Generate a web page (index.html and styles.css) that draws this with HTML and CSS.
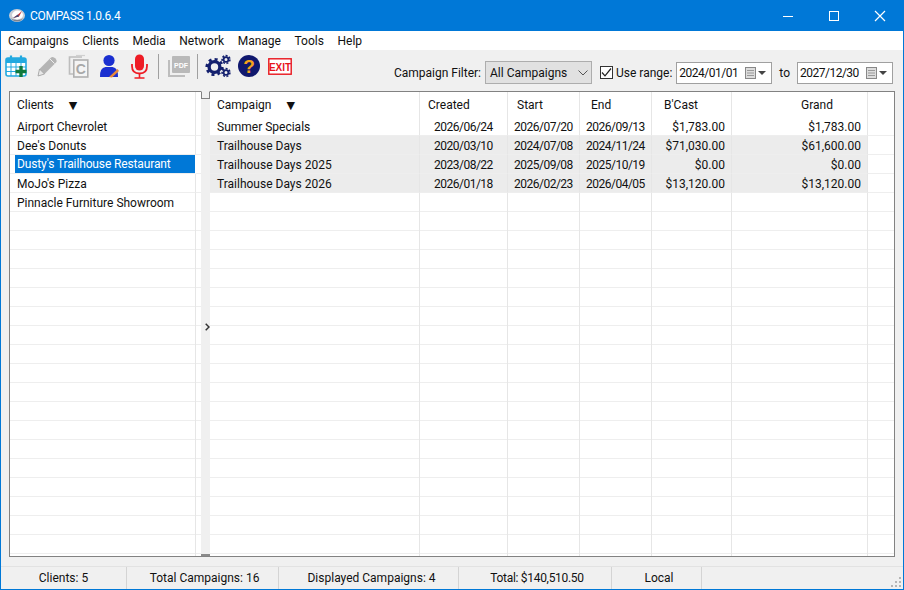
FILE: index.html
```html
<!DOCTYPE html>
<html lang="en">
<head>
  <meta charset="UTF-8">
  <title>COMPASS 1.0.6.4</title>
  <link rel="stylesheet" href="styles.css">
</head>

<body>
  <div class="window">

    <div class="titlebar">
      <svg class="app-icon" width="18" height="16" viewBox="0 0 18 16">
        <ellipse cx="9" cy="7.5" rx="8" ry="6.5" fill="#c9ced6"/>
        <ellipse cx="9.5" cy="7" rx="5.5" ry="4.4" fill="#fff"/>
        <path d="M5 10 L10 6.5 L14 3 L11 8.5 Z" fill="#c8383c"/>
        <path d="M5 10 L10 6.5 L11 8.5 Z" fill="#3c4a78"/>
        <path d="M2 10 Q9 17 16 10 Q9 14 2 10 Z" fill="#7d8490"/>
      </svg>
      <span class="app-title">COMPASS 1.0.6.4</span>
      <div class="caption-buttons">
        <svg width="46" height="30" viewBox="0 0 46 30"><path d="M18 15.5 H28" stroke="#fff" fill="none"/></svg>
        <svg width="46" height="30" viewBox="0 0 46 30"><rect x="18.5" y="10.5" width="9" height="9" stroke="#fff" fill="none"/></svg>
        <svg width="46" height="30" viewBox="0 0 46 30"><path d="M18 10 L28 20 M28 10 L18 20" stroke="#fff" stroke-width="1.2" fill="none"/></svg>
      </div>
    </div>

    <div class="menubar">
      <span>Campaigns</span>
      <span>Clients</span>
      <span>Media</span>
      <span>Network</span>
      <span>Manage</span>
      <span>Tools</span>
      <span>Help</span>
    </div>

    <div class="toolbar">
      <div class="tools">
        <!-- new campaign -->
        <svg class="tool tool-cal" width="22" height="24" viewBox="0 0 22 24">
          <rect x="1" y="4" width="20" height="18" rx="2" fill="#fff" stroke="#22a9e0" stroke-width="1.6"/>
          <rect x="1" y="4" width="20" height="5" fill="#22a9e0"/>
          <path d="M6 1.5 V6 M16 1.5 V6" stroke="#22a9e0" stroke-width="2.2" fill="none"/>
          <path d="M1 13 H21 M1 17.5 H21 M6 9 V22 M11 9 V22 M16 9 V22" stroke="#22a9e0" fill="none"/>
          <path d="M16 12 V23 M10.5 17.5 H21.5" stroke="#0f7a3c" stroke-width="3.4" fill="none"/>
        </svg>
        <!-- edit, disabled -->
        <svg class="tool tool-pencil" width="22" height="24" viewBox="0 0 22 24">
          <path d="M2 22 L3.5 15 L15 3.5 Q17 2 19.5 4.5 Q21.5 7 20 8.5 L8.5 20 Z" fill="#b4b4b4"/>
          <path d="M2 22 L3.5 15 L8.5 20 Z" fill="#e8e8e8" stroke="#a0a0a0" stroke-width=".8"/>
          <path d="M14 5 L18.5 9.5" stroke="#efefef" fill="none"/>
        </svg>
        <!-- copy, disabled -->
        <svg class="tool tool-copy" width="21" height="24" viewBox="0 0 21 24">
          <path d="M5 20 H1.5 V3 H14" stroke="#bdbdbd" stroke-width="1.6" fill="none"/>
          <path d="M8 1.5 H17" stroke="#d0d0d0" stroke-width="1.2" fill="none"/>
          <rect x="5.8" y="6" width="14" height="17" fill="#f4f4f4" stroke="#b0b0b0" stroke-width="1.6"/>
          <text class="copy-letter" x="12.8" y="19.5" text-anchor="middle">C</text>
        </svg>
        <!-- client -->
        <svg class="tool tool-user" width="22" height="24" viewBox="0 0 22 24">
          <circle cx="11" cy="6.5" r="5.6" fill="#1a2fd0"/>
          <path d="M2 23 Q1.5 14 7.5 13 H14.5 Q20.5 14 20 23 Z" fill="#1a2fd0"/>
          <path d="M11 23 L19.5 15 L21 17 L14 23.5 Z" fill="#e8893a"/>
        </svg>
        <!-- voice -->
        <svg class="tool tool-mic" width="21" height="25" viewBox="0 0 21 25">
          <rect x="6" y="0.5" width="9" height="16" rx="4.5" fill="#ee1c25"/>
          <path d="M3 10 V12 Q3 19.5 10.5 19.5 Q18 19.5 18 12 V10" stroke="#ee1c25" stroke-width="1.8" fill="none"/>
          <path d="M10.5 19.5 V23.5 M5.5 24 H15.5" stroke="#ee1c25" stroke-width="1.6" fill="none"/>
        </svg>
        <span class="tool-sep"></span>
        <!-- pdf, disabled -->
        <svg class="tool tool-pdf" width="22" height="24" viewBox="0 0 22 24">
          <path d="M1 6 V22 H17" stroke="#bdbdbd" stroke-width="2" fill="none"/>
          <rect x="4" y="2" width="18" height="17" rx="1" fill="#b9b9b9"/>
          <text class="pdf-letters" x="13" y="13.5" text-anchor="middle">PDF</text>
        </svg>
        <span class="tool-sep tool-sep-2"></span>
        <!-- settings -->
        <svg class="tool tool-gears" width="26" height="24" viewBox="0 0 26 24">
          <circle cx="9.5" cy="13" r="5.4" fill="none" stroke="#14206e" stroke-width="3.4"/>
          <circle cx="9.5" cy="13" r="7.8" fill="none" stroke="#14206e" stroke-width="2.6" stroke-dasharray="3 3.1"/>
          <circle cx="21" cy="5.5" r="2.4" fill="none" stroke="#14206e" stroke-width="1.8"/>
          <circle cx="21" cy="5.5" r="3.9" fill="none" stroke="#14206e" stroke-width="1.6" stroke-dasharray="2 1.5"/>
          <circle cx="21" cy="18.5" r="2.4" fill="none" stroke="#14206e" stroke-width="1.8"/>
          <circle cx="21" cy="18.5" r="3.9" fill="none" stroke="#14206e" stroke-width="1.6" stroke-dasharray="2 1.5"/>
        </svg>
        <!-- help -->
        <svg class="tool tool-help" width="22" height="24" viewBox="0 0 22 24">
          <circle cx="11" cy="12" r="11" fill="#10186e"/>
          <text class="help-letter" x="11" y="18.5" text-anchor="middle">?</text>
        </svg>
        <!-- exit -->
        <svg class="tool tool-exit" width="24" height="24" viewBox="0 0 24 24">
          <rect x="0.8" y="4.8" width="22.4" height="15.4" fill="#fff" stroke="#e8141c" stroke-width="1.4"/>
          <text class="exit-letters" x="12" y="17" text-anchor="middle">EXIT</text>
        </svg>
      </div>

      <div class="filters">
        <span class="filter-label">Campaign Filter:</span>
        <div class="combo">
          <span>All Campaigns</span>
          <svg width="10" height="6" viewBox="0 0 10 6"><path d="M0.5 0.5 L5 5 L9.5 0.5" stroke="#555" fill="none"/></svg>
        </div>
        <label class="use-range">
          <span class="checkbox">
            <svg width="13" height="13" viewBox="0 0 13 13"><path d="M2 6.5 L5 9.8 L11 2.5" stroke="#222" stroke-width="1.2" fill="none"/></svg>
          </span>
          Use range:
        </label>
        <div class="datebox">
          <span class="date-text">2024/01/01</span>
          <svg class="date-btn" width="24" height="12" viewBox="0 0 24 12">
            <rect x="0.5" y="0.5" width="10" height="11" fill="#ddd" stroke="#888"/>
            <path d="M2 3.5 H9 M2 6 H9 M2 8.5 H9" stroke="#999" fill="none"/>
            <path d="M13 4 H21 L17 8 Z" fill="#444"/>
          </svg>
        </div>
        <span class="to-label">to</span>
        <div class="datebox">
          <span class="date-text">2027/12/30</span>
          <svg class="date-btn" width="24" height="12" viewBox="0 0 24 12">
            <rect x="0.5" y="0.5" width="10" height="11" fill="#ddd" stroke="#888"/>
            <path d="M2 3.5 H9 M2 6 H9 M2 8.5 H9" stroke="#999" fill="none"/>
            <path d="M13 4 H21 L17 8 Z" fill="#444"/>
          </svg>
        </div>
      </div>
    </div>

    <div class="panes">
      <div class="pane pane-clients">
        <table class="grid">
          <colgroup>
            <col class="col-client">
            <col>
          </colgroup>
          <thead>
            <tr><th>Clients <span class="sort-mark sort-clients">▼</span></th><th></th></tr>
          </thead>
          <tbody>
            <tr><td>Airport Chevrolet</td><td></td></tr>
            <tr><td>Dee's Donuts</td><td></td></tr>
            <tr><td class="selected"><span class="sel-bar">Dusty's Trailhouse Restaurant</span></td><td></td></tr>
            <tr><td>MoJo's Pizza</td><td></td></tr>
            <tr><td>Pinnacle Furniture Showroom</td><td></td></tr>
            <tr class="filler"><td></td><td></td></tr>
          </tbody>
        </table>
      </div>

      <div class="splitter">
        <span class="split-top"></span>
        <svg class="split-arrow" width="5" height="8" viewBox="0 0 5 8"><path d="M0.7 0.7 L4 4 L0.7 7.3" stroke="#333" stroke-width="1.5" fill="none"/></svg>
        <span class="split-grip"></span>
      </div>

      <div class="pane pane-campaigns">
        <table class="grid">
          <colgroup>
            <col class="col-campaign">
            <col class="col-created">
            <col class="col-start">
            <col class="col-end">
            <col class="col-bcast">
            <col class="col-grand">
            <col>
          </colgroup>
          <thead>
            <tr>
              <th>Campaign <span class="sort-mark sort-campaign">▼</span></th>
              <th class="h-created">Created</th>
              <th class="h-start">Start</th>
              <th class="h-end">End</th>
              <th class="h-bcast">B'Cast</th>
              <th class="h-grand">Grand</th>
              <th></th>
            </tr>
          </thead>
          <tbody>
            <tr>
              <td>Summer Specials</td>
              <td class="d-created">2026/06/24</td><td class="d-date">2026/07/20</td><td class="d-date">2026/09/13</td>
              <td class="money">$1,783.00</td><td class="money">$1,783.00</td><td class="no-fill"></td>
            </tr>
            <tr class="shaded">
              <td>Trailhouse Days</td>
              <td class="d-created">2020/03/10</td><td class="d-date">2024/07/08</td><td class="d-date">2024/11/24</td>
              <td class="money">$71,030.00</td><td class="money">$61,600.00</td><td class="no-fill"></td>
            </tr>
            <tr class="shaded">
              <td>Trailhouse Days 2025</td>
              <td class="d-created">2023/08/22</td><td class="d-date">2025/09/08</td><td class="d-date">2025/10/19</td>
              <td class="money">$0.00</td><td class="money">$0.00</td><td class="no-fill"></td>
            </tr>
            <tr class="shaded">
              <td>Trailhouse Days 2026</td>
              <td class="d-created">2026/01/18</td><td class="d-date">2026/02/23</td><td class="d-date">2026/04/05</td>
              <td class="money">$13,120.00</td><td class="money">$13,120.00</td><td class="no-fill"></td>
            </tr>
            <tr class="filler"><td></td><td></td><td></td><td></td><td></td><td></td><td></td></tr>
          </tbody>
        </table>
      </div>
    </div>

    <div class="statusbar">
      <span class="stat stat-clients">Clients: 5</span>
      <span class="stat stat-total">Total Campaigns: 16</span>
      <span class="stat stat-shown">Displayed Campaigns: 4</span>
      <span class="stat stat-sum">Total: $140,510.50</span>
      <span class="stat stat-mode">Local</span>
      <svg class="grip" width="12" height="12" viewBox="0 0 12 12">
        <path d="M9 1 h2 v2 h-2 z M5 5 h2 v2 h-2 z M9 5 h2 v2 h-2 z M1 9 h2 v2 h-2 z M5 9 h2 v2 h-2 z M9 9 h2 v2 h-2 z" fill="#b5b5b5"/>
      </svg>
    </div>

  </div>
</body>
</html>
```

FILE: styles.css
```css
* {
  margin: 0;
  padding: 0;
  box-sizing: border-box;
}

body {
  width: 904px;
  height: 590px;
  overflow: hidden;
  font-family: Roboto, "Noto Sans", sans-serif;
  font-size: 12px;
  color: #111;
  background: #f0f0f0;
}

.window {
  display: flex;
  flex-direction: column;
  width: 904px;
  height: 590px;
  border: 1px solid #0078d7;
  border-top: none;
  background: #f0f0f0;
}

/* Title bar */
.titlebar {
  display: flex;
  align-items: center;
  flex: 0 0 31px;
  margin: 0 -1px;
  padding-left: 8px;
  background: #0078d7;
  color: #fff;
}

.app-icon {
  margin-right: 4px;
}

.app-title {
  font-size: 12px;
  letter-spacing: -0.3px;
}

.caption-buttons {
  display: flex;
  margin-left: auto;
  margin-right: 1px;
}

/* Menu */
.menubar {
  display: flex;
  align-items: center;
  gap: 13.6px;
  flex: 0 0 19px;
  padding: 2px 0 0 7px;
  background: #fff;
  line-height: 17px;
}

/* Toolbar */
.toolbar {
  display: flex;
  justify-content: space-between;
  flex: 0 0 41px;
  padding: 4px 10px 0 4px;
}

.tools {
  display: flex;
  align-items: flex-start;
}

.tool {
  flex: none;
}

.tool-pencil, .tool-copy {
  margin-left: 9px;
}

.tool-copy {
  margin-left: 10px;
}

.tool-user {
  margin-left: 9px;
}

.tool-mic {
  margin-left: 9px;
}

.tool-pdf {
  margin-left: 9px;
}

.tool-gears {
  margin-left: 7px;
}

.tool-help {
  margin-left: 7px;
}

.tool-exit {
  margin-left: 8px;
}

.tool-sep {
  width: 1px;
  height: 25px;
  margin-left: 8px;
  background: #a0a0a0;
}

.tool-sep-2 {
  margin-left: 7px;
}

.copy-letter {
  font-family: "Liberation Sans", sans-serif;
  font-size: 14px;
  font-weight: bold;
  fill: #a8a8a8;
}

.pdf-letters {
  font-family: "Liberation Sans", sans-serif;
  font-size: 7px;
  font-weight: bold;
  fill: #fff;
}

.help-letter {
  font-family: "Liberation Sans", sans-serif;
  font-size: 19px;
  font-weight: bold;
  fill: #f5a31a;
}

.exit-letters {
  font-family: "Liberation Sans", sans-serif;
  font-size: 10px;
  font-weight: bold;
  fill: #e8141c;
}

.filters {
  display: flex;
  align-items: center;
  height: 23px;
  margin-top: 7px;
}

.filter-label {
  margin-right: 4px;
}

.combo {
  display: flex;
  align-items: center;
  justify-content: space-between;
  width: 107px;
  height: 23px;
  padding: 0 3px 0 4px;
  border: 1px solid #adadad;
  background: #e1e1e1;
}

.use-range {
  display: flex;
  align-items: center;
  margin-left: 8px;
}

.checkbox {
  display: flex;
  width: 13px;
  height: 13px;
  margin-right: 3px;
  border: 1px solid #333;
  background: #fff;
}

.checkbox svg {
  margin: -1px;
}

.datebox {
  display: flex;
  align-items: center;
  justify-content: space-between;
  width: 96px;
  height: 22px;
  margin-left: 4px;
  padding: 0 2px 0 2px;
  border: 1px solid #a0a0a0;
  background: #fff;
}

.date-text {
  letter-spacing: -0.5px;
}

.to-label {
  margin-left: 7px;
  margin-right: 3px;
}

/* Split panes */
.panes {
  display: flex;
  flex: 0 0 466px;
  margin: 0 8px 0 8px;
  border: 1px solid #828282;
  background: #fff;
}

.pane {
  height: 100%;
}

.pane-clients {
  width: 191px;
}

.pane-campaigns {
  flex: 1;
}

.splitter {
  position: relative;
  width: 9px;
  background: #f0f0f0;
}

.split-top {
  position: absolute;
  left: 0;
  top: -1px;
  width: 9px;
  height: 8px;
  background: #f0f0f0;
  border: 1px solid #828282;
  border-top-color: #f0f0f0;
}

.split-arrow {
  position: absolute;
  left: 4px;
  top: 231px;
}

.split-grip {
  position: absolute;
  left: 0;
  bottom: 0;
  width: 9px;
  height: 2px;
  background: #8a8a8a;
}

/* Grids */
.grid {
  width: 100%;
  height: 100%;
  table-layout: fixed;
  border-collapse: separate;
  border-spacing: 0;
}

.col-client { width: 186px; }
.col-campaign { width: 210px; }
.col-created { width: 88px; }
.col-start { width: 72px; }
.col-end { width: 72px; }
.col-bcast { width: 80px; }
.col-grand { width: 136px; }

.grid th {
  height: 25px;
  padding-left: 7px;
  border-right: 1px solid #e6e6e6;
  font-weight: normal;
  text-align: left;
  white-space: nowrap;
}

.grid td {
  height: 19px;
  padding-top: 1px;
  padding-left: 7px;
  border-right: 1px solid #e6e6e6;
  border-bottom: 1px solid #eeeeee;
  white-space: nowrap;
  overflow: hidden;
}

.grid th:last-child, .grid td:last-child {
  border-right: none;
}

.sort-mark {
  display: inline-block;
  font-family: "DejaVu Sans", sans-serif;
  font-size: 11px;
}

.sort-clients {
  margin-left: 12px;
}

.sort-campaign {
  margin-left: 12px;
}

.h-created { padding-left: 8px !important; }
.h-start { padding-left: 9px !important; }
.h-end { padding-left: 11px !important; }
.h-bcast { padding-left: 12px !important; }
.h-grand { padding-left: 69px !important; }

.d-created { padding-left: 14px !important; letter-spacing: -0.5px; }
.d-date { padding-left: 6px !important; letter-spacing: -0.5px; }

.money {
  padding-left: 0 !important;
  padding-right: 6px;
  text-align: right;
}

.shaded td {
  background: #ececec;
}

.shaded td.no-fill {
  background: #fff;
}

.grid td.selected {
  padding-top: 0;
  padding-left: 5px;
  padding-right: 0;
  border-right-color: #fff;
}

.sel-bar {
  display: block;
  height: 18px;
  padding-left: 2px;
  line-height: 19px;
  background: #0078d7;
  color: #fff;
  letter-spacing: -0.13px;
}

.grid .filler td {
  height: auto;
  padding: 0;
  border-bottom: none;
  background: repeating-linear-gradient(#fff 0, #fff 18px, #eeeeee 18px, #eeeeee 19px);
}

/* Status bar */
.statusbar {
  display: flex;
  align-items: center;
  position: relative;
  flex: 1;
  margin-top: 9px;
  border-top: 1px solid #e2e2e2;
}

.stat {
  height: 100%;
  padding-top: 4px;
  border-right: 1px solid #d4d4d4;
  text-align: center;
}

.stat-clients { width: 126px; }
.stat-total { width: 152px; padding-left: 4px; }
.stat-shown { width: 180px; padding-left: 6px; }
.stat-sum { width: 153px; padding-left: 4px; letter-spacing: -0.3px; }
.stat-mode { width: 90px; padding-left: 5px; }

.grip {
  position: absolute;
  right: 1px;
  bottom: 1px;
}
```
